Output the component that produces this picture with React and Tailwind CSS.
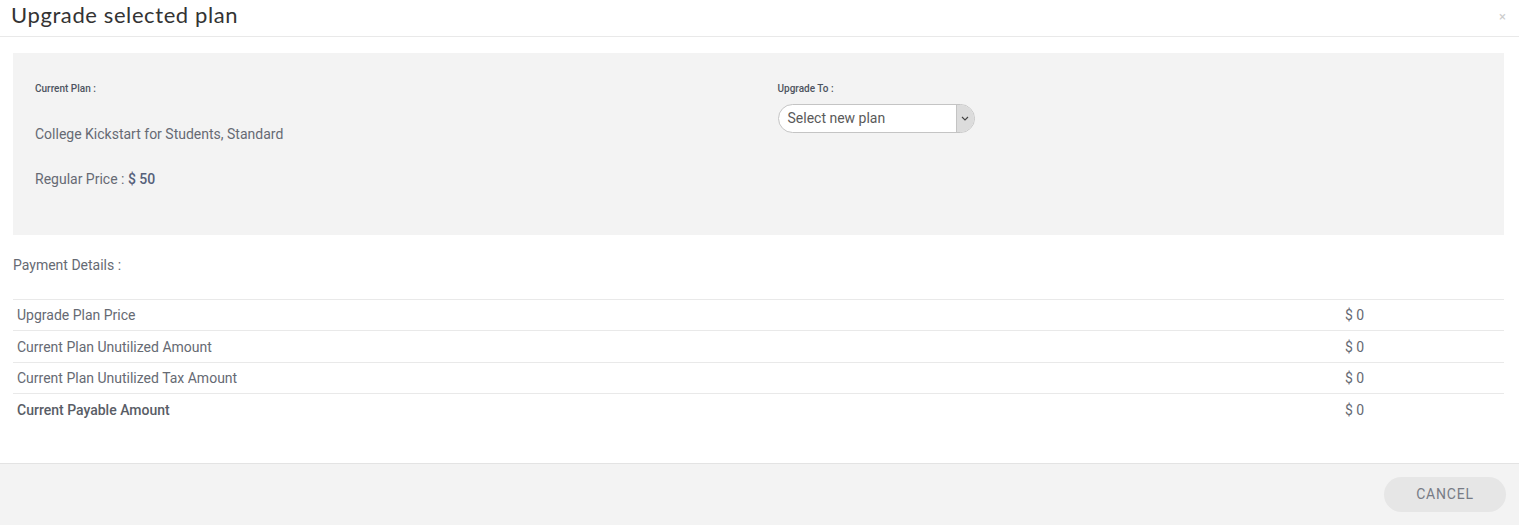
import React from 'react';

const rows = [
  { label: 'Upgrade Plan Price', value: '$ 0', h: 'h-[31px]' },
  { label: 'Current Plan Unutilized Amount', value: '$ 0', h: 'h-[32px]' },
  { label: 'Current Plan Unutilized Tax Amount', value: '$ 0', h: 'h-[31px]' },
  { label: 'Current Payable Amount', value: '$ 0', h: 'h-[31px]', bold: true },
];

export default function App() {
  return (
    <div className="w-[1519px] h-[525px] bg-white flex flex-col font-['Roboto',sans-serif] text-[#666]">
      {/* Header */}
      <div className="h-[37px] border-b border-[#e9e9e9] flex items-center justify-between pl-[11px] pr-[13px]">
        <h2 className="text-[22px] leading-none text-[#333] font-normal font-['Lato',sans-serif] tracking-[0.6px] -mt-[6px]">
          Upgrade selected plan
        </h2>
        <span className="text-[13px] text-[#ccc] leading-none -mt-[4px]">×</span>
      </div>

      {/* Body */}
      <div className="flex-1 pl-[13px] pr-[15px] pt-[16px]">
        <div className="bg-[#f3f3f3] h-[182px] grid grid-cols-2 pl-[22px] pt-[29px]">
          <div>
            <div className="text-[10px] font-medium text-[#4d5360] leading-[14px]">Current Plan :</div>
            <div className="mt-[30px] text-[14px] leading-[16px] text-[#666a73]">College Kickstart for Students, Standard</div>
            <div className="mt-[29px] text-[14px] leading-[16px] text-[#666a73]">
              Regular Price : <span className="font-medium text-[#55607a]">$ 50</span>
            </div>
          </div>
          <div className="pl-[8px]">
            <div className="text-[10px] font-medium text-[#4d5360] leading-[14px]">Upgrade To :</div>
            <div className="mt-[8px] w-[197px] h-[29px] rounded-full border border-[#c4c4c4] bg-white flex items-center overflow-hidden">
              <span className="flex-1 pl-[9px] text-[14px] text-[#5a5a5a]">Select new plan</span>
              <span className="w-[18px] h-full bg-[#dcdcdc] border-l border-[#c4c4c4] flex items-center justify-center">
                <svg width="8" height="5" viewBox="0 0 8 5" fill="none">
                  <path d="M1 1l3 3 3-3" stroke="#444" strokeWidth="1.1" />
                </svg>
              </span>
            </div>
          </div>
        </div>

        <div className="mt-[22px] text-[14px] leading-[16px] text-[#666a73]">Payment Details :</div>

        <div className="mt-[26px] border-t border-[#e9e9e9]">
          {rows.map((r, i) => (
            <div
              key={r.label}
              className={`flex items-center pt-[1px] ${r.h} text-[14px] ${i < rows.length - 1 ? 'border-b border-[#e9e9e9]' : ''} ${r.bold ? 'font-medium text-[#595d66]' : 'text-[#666a73]'}`}
            >
              <span className="flex-1 pl-[4px]">{r.label}</span>
              <span className="w-[159px] text-[#666a73] font-normal">{r.value}</span>
            </div>
          ))}
        </div>
      </div>

      {/* Footer */}
      <div className="h-[62px] border-t border-[#e3e3e3] bg-[#f3f3f3] flex items-center justify-end pr-[13px]">
        <button className="w-[122px] h-[35px] rounded-full bg-[#e6e6e6] text-[14px] tracking-[0.8px] text-[#777b85]">
          CANCEL
        </button>
      </div>
    </div>
  );
}
